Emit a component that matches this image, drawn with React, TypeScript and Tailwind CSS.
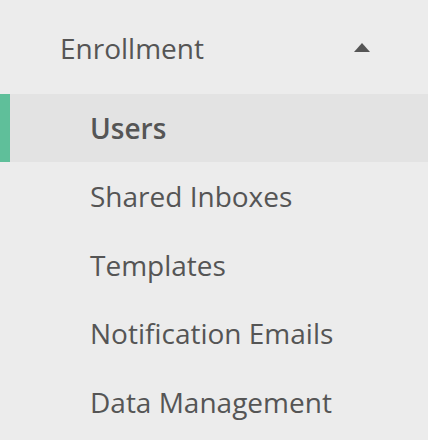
const items = ["Users", "Shared Inboxes", "Templates", "Notification Emails", "Data Management"];

export default function App() {
  return (
    <nav
      className="w-[428px] h-[440px] bg-[#ececec] text-[#555555] overflow-hidden"
      style={{ fontFamily: '"Open Sans", sans-serif' }}
    >
      <button className="flex w-full h-[94px] items-center justify-between pl-[60px] pr-[58px] pt-[2px] text-[28px]">
        <span>Enrollment</span>
        <svg width="16" height="9" viewBox="0 0 16 9" className="mt-[-2px]">
          <path d="M8 0 L16 9 L0 9 Z" fill="#555555" />
        </svg>
      </button>
      <ul>
        {items.map((label, i) => (
          <li
            key={label}
            className={
              i === 0
                ? "flex h-[68px] items-center bg-[#e3e3e3] border-l-[10px] border-[#5fbf9a] pl-[80px] text-[28px] font-semibold"
                : "flex h-[68.6px] items-center pl-[90px] text-[28px]"
            }
          >
            {label}
          </li>
        ))}
      </ul>
    </nav>
  );
}
